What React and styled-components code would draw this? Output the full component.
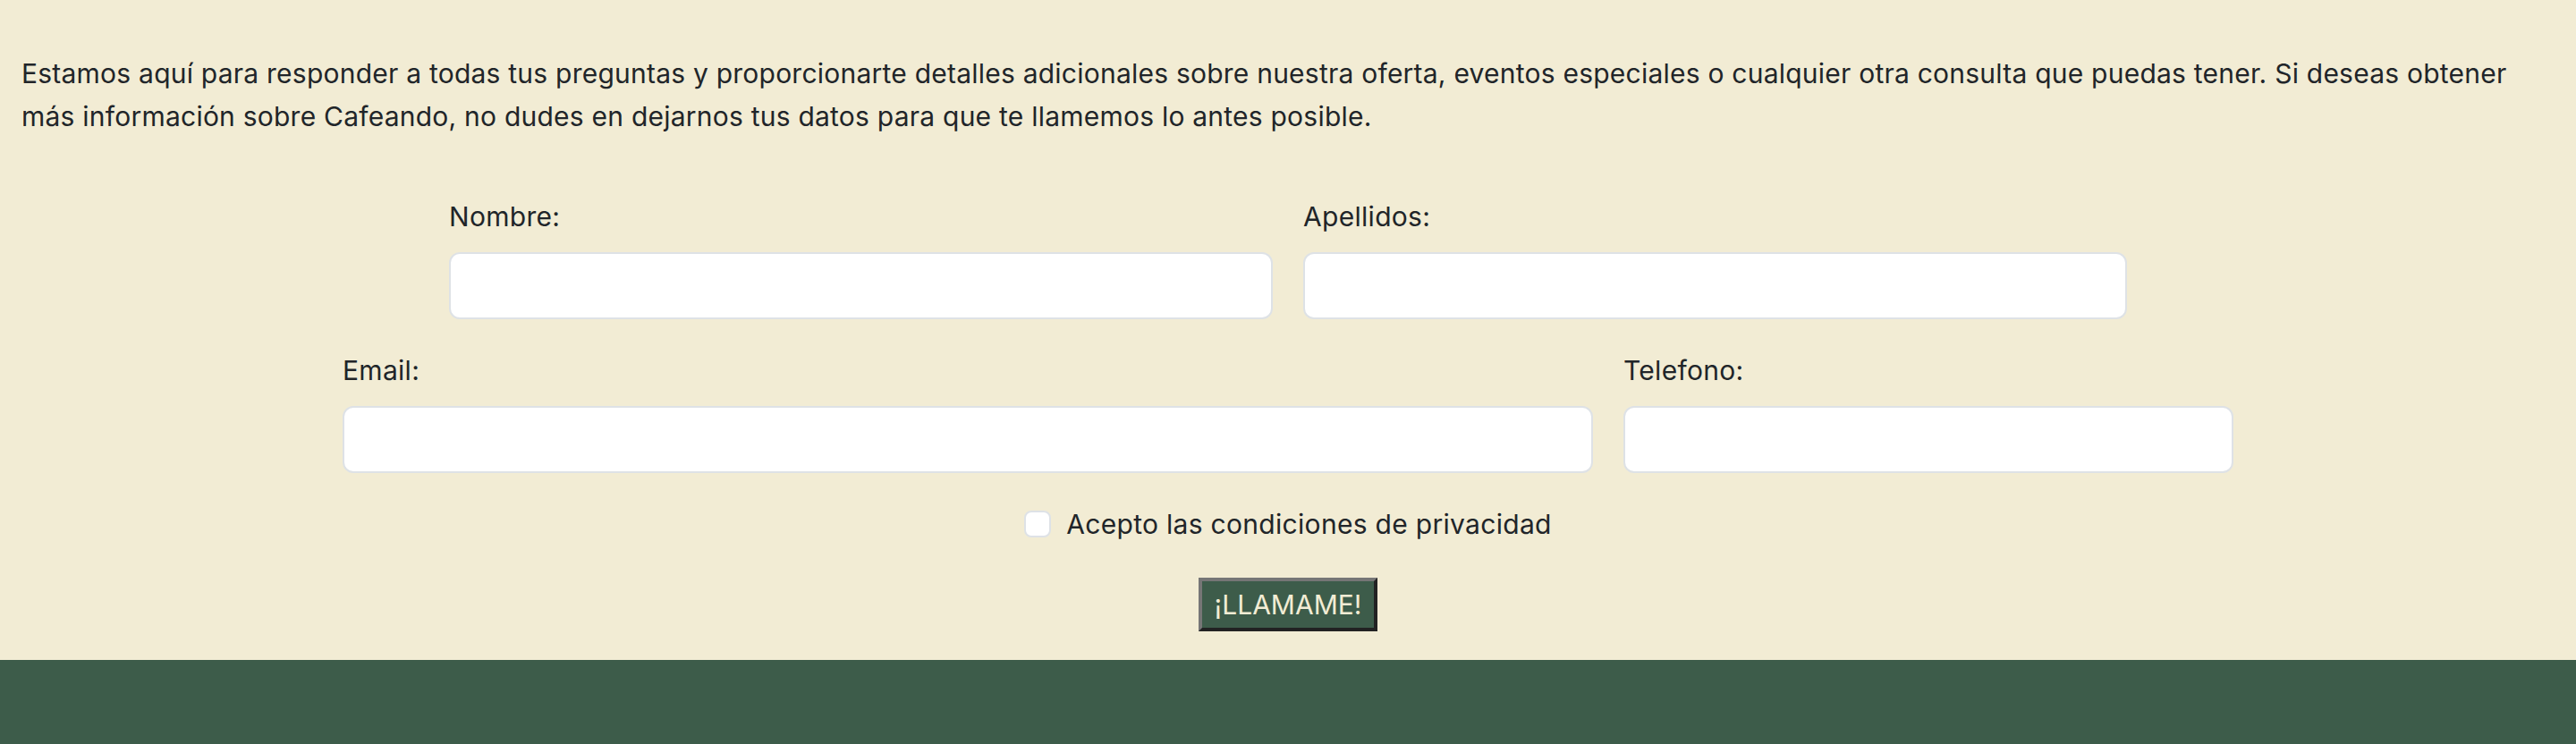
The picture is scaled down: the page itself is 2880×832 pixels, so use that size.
import React from 'react';
import styled, { createGlobalStyle } from 'styled-components';

const GlobalStyle = createGlobalStyle`
  body {
    margin: 0;
    background: #f2ecd4;
    color: #212529;
    font-family: Inter, "Noto Sans", "Liberation Sans", sans-serif;
  }
`;

const App = () => {
  return (
    <>
      <GlobalStyle />
      <Page>
        <Contact>
          <Intro>
            Estamos aquí para responder a todas tus preguntas y proporcionarte detalles adicionales sobre nuestra oferta,
            eventos especiales o cualquier otra consulta que puedas tener. Si deseas obtener más información sobre
            Cafeando, no dudes en dejarnos tus datos para que te llamemos lo antes posible.
          </Intro>
          <Form onSubmit={(e) => e.preventDefault()}>
            <Row>
              <Field width={921}>
                <Label htmlFor="nombre">Nombre:</Label>
                <Input id="nombre" type="text" />
              </Field>
              <Field width={921}>
                <Label htmlFor="apellidos">Apellidos:</Label>
                <Input id="apellidos" type="text" />
              </Field>
            </Row>
            <Row>
              <Field width={1398}>
                <Label htmlFor="email">Email:</Label>
                <Input id="email" type="email" />
              </Field>
              <Field width={682}>
                <Label htmlFor="telefono">Telefono:</Label>
                <Input id="telefono" type="tel" />
              </Field>
            </Row>
            <CheckRow>
              <Check type="checkbox" id="privacidad" />
              <CheckLabel htmlFor="privacidad">Acepto las condiciones de privacidad</CheckLabel>
            </CheckRow>
            <CallButton type="submit">¡LLAMAME!</CallButton>
          </Form>
        </Contact>
        <Footer />
      </Page>
    </>
  );
};

export default App;

const Page = styled.div`
  display: flex;
  flex-direction: column;
`;

const Contact = styled.section`
  padding: 58px 24px 32px;
`;

const Intro = styled.p`
  margin: 0;
  font-size: 30px;
  line-height: 48px;
  letter-spacing: 0.23px;
`;

const Form = styled.form`
  display: flex;
  flex-direction: column;
  align-items: center;
  margin-top: 64px;
`;

const Row = styled.div`
  display: flex;
  gap: 34px;

  & + & {
    margin-top: 33px;
  }
`;

const Field = styled.div`
  display: flex;
  flex-direction: column;
  width: ${(props) => props.width}px;
`;

const Label = styled.label`
  font-size: 30px;
  line-height: 48px;
  letter-spacing: 0.3px;
  margin-bottom: 16px;
`;

const Input = styled.input`
  box-sizing: border-box;
  height: 75px;
  width: 100%;
  padding: 12px 24px;
  font: inherit;
  font-size: 29px;
  background: #fff;
  border: 2px solid #dee2e6;
  border-radius: 12px;
  outline: none;
`;

const CheckRow = styled.div`
  display: flex;
  align-items: center;
  gap: 17px;
  margin-top: 33px;
`;

const Check = styled.input`
  appearance: none;
  box-sizing: border-box;
  width: 30px;
  height: 30px;
  margin: 0;
  background: #fff;
  border: 2px solid #dee2e6;
  border-radius: 8px;
`;

const CheckLabel = styled.label`
  font-size: 30px;
  line-height: 48px;
  letter-spacing: 0.3px;
`;

const CallButton = styled.button`
  box-sizing: border-box;
  height: 60px;
  margin-top: 36px;
  padding: 0 14px;
  font-family: inherit;
  font-size: 30px;
  color: #f2ecd4;
  background: #3d5c4a;
  border: 4px solid;
  border-color: #767676 #222 #222 #767676;
  cursor: pointer;
`;

const Footer = styled.footer`
  height: 200px;
  background: #3d5c4a;
`;
